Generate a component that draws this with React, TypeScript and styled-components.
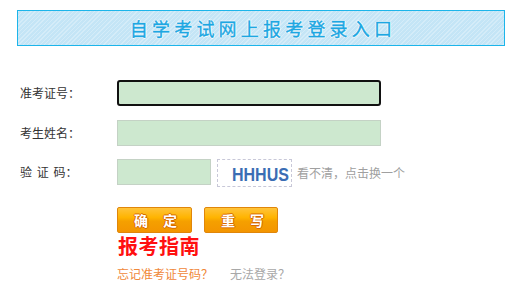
import React from "react";
import styled, { createGlobalStyle } from "styled-components";

const Global = createGlobalStyle`
  html, body { margin: 0; padding: 0; background: #fff; }
  body { font-family: "Noto Sans CJK SC", "Noto Sans", sans-serif; }
`;

const Page = styled.div`
  width: 511px;
  height: 294px;
  padding: 10px 6px 0 17px;
  box-sizing: border-box;
`;

const Header = styled.div`
  height: 36px;
  box-sizing: border-box;
  border: 1px solid #1cb5ea;
  background: repeating-linear-gradient(
      135deg,
      rgba(255, 255, 255, 0.28) 0px,
      rgba(255, 255, 255, 0.28) 1px,
      rgba(255, 255, 255, 0) 1px,
      rgba(255, 255, 255, 0) 3px
    ),
    #c4e5f6;
  display: flex;
  align-items: center;
  justify-content: center;
`;

const Title = styled.h1`
  margin: 0;
  font-family: "Noto Sans CJK SC", sans-serif;
  font-size: 18px;
  font-weight: 400;
  letter-spacing: 4.2px;
  padding-left: 4px;
  color: #1da7e2;
  line-height: 20px;
  -webkit-text-stroke: 0.4px #1da7e2;
  text-shadow: 1px 0 0 #fff, -1px 0 0 #fff, 0 1px 0 #fff, 0 -1px 0 #fff;
`;

const Form = styled.div`
  display: flex;
  flex-direction: column;
  gap: 14px;
  padding: 34px 0 0 3px;
`;

const Row = styled.div<{ h?: number; lift?: number }>`
  display: flex;
  align-items: flex-start;
  height: ${(p) => p.h ?? 26}px;
  margin-top: ${(p) => -(p.lift ?? 0)}px;
`;

const Label = styled.span`
  width: 97px;
  line-height: 26px;
  font-size: 12px;
  color: #333;
  white-space: pre;
  word-spacing: 2px;
`;

const Input = styled.div<{ w: number; focused?: boolean }>`
  width: ${(p) => p.w}px;
  height: 26px;
  box-sizing: border-box;
  background: #cde8cf;
  border: ${(p) => (p.focused ? "2px solid #111" : "1px solid #c4d2c5")};
  border-radius: ${(p) => (p.focused ? "3px" : "0")};
`;

const Captcha = styled.div`
  margin-left: 6px;
  width: 75px;
  height: 28px;
  box-sizing: border-box;
  border: 1px dashed #c8c8d8;
  background: #fff;
  display: flex;
  align-items: center;
  padding-left: 14px;
  overflow: hidden;
`;

const CaptchaText = styled.span`
  font-family: "Liberation Sans", Arial, sans-serif;
  font-weight: 700;
  font-size: 16px;
  color: #3b6db4;
  display: inline-block;
  transform: scaleY(1.2);
  margin-top: 3px;
`;

const Hint = styled.span`
  margin-left: 5px;
  font-size: 12px;
  color: #a0a0a0;
  line-height: 28px;
`;

const Buttons = styled.div`
  display: flex;
  gap: 12px;
  padding-left: 100px;
  margin-top: 20px;
`;

const Btn = styled.button<{ w: number }>`
  width: ${(p) => p.w}px;
  height: 26px;
  box-sizing: border-box;
  padding: 0 0 0 16px;
  border: 1px solid #e0860a;
  border-radius: 2px;
  background: linear-gradient(
    to bottom,
    #ffc33a 0%,
    #ffb400 40%,
    #f5a000 55%,
    #f39500 100%
  );
  color: #fff;
  font-family: "Noto Sans CJK SC", sans-serif;
  font-weight: 700;
  font-size: 14px;
  line-height: 24px;
  letter-spacing: 15px;
  text-align: left;
  white-space: nowrap;
  overflow: hidden;
  text-shadow: 1px 0 0 #d86a00, -1px 0 0 #d86a00, 0 1px 0 #d86a00, 0 -1px 0 #d86a00;
  cursor: pointer;
`;

const Guide = styled.div`
  margin: 3px 0 0 101px;
  font-size: 20px;
  line-height: 20px;
  font-weight: 700;
  letter-spacing: 0.5px;
  color: #ff1010;
`;

const Links = styled.div`
  display: flex;
  gap: 17px;
  margin: 11px 0 0 100px;
  font-size: 12px;
  line-height: 14px;
`;

const Link = styled.a<{ tone: string }>`
  color: ${(p) => p.tone};
  text-decoration: none;
`;

export default function App() {
  return (
    <>
      <Global />
      <Page>
        <Header>
          <Title>自学考试网上报考登录入口</Title>
        </Header>
        <Form>
          <Row>
            <Label>准考证号：</Label>
            <Input w={264} focused />
          </Row>
          <Row>
            <Label>考生姓名：</Label>
            <Input w={264} />
          </Row>
          <Row h={28} lift={1}>
            <Label>验 证 码：</Label>
            <Input w={94} />
            <Captcha>
              <CaptchaText>HHHUS</CaptchaText>
            </Captcha>
            <Hint>看不清，点击换一个</Hint>
          </Row>
        </Form>
        <Buttons>
          <Btn w={75}>确定</Btn>
          <Btn w={74}>重写</Btn>
        </Buttons>
        <Guide>报考指南</Guide>
        <Links>
          <Link tone="#f0883a" href="#">忘记准考证号码？</Link>
          <Link tone="#a8a8a8" href="#">无法登录？</Link>
        </Links>
      </Page>
    </>
  );
}
